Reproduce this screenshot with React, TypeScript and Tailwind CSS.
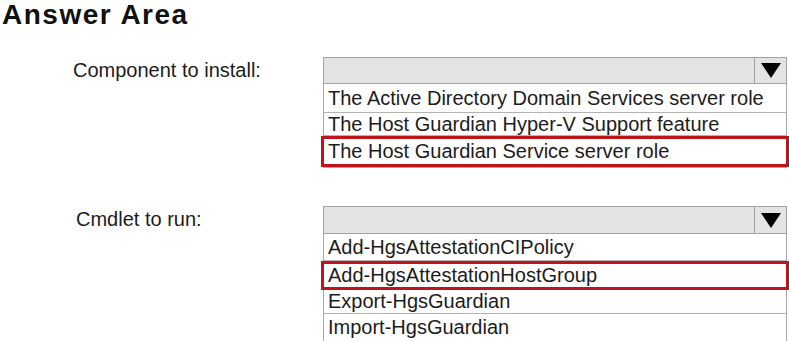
import React from "react";

interface Option {
  label: string;
  height: string;
  selected?: boolean;
}

interface AnswerRowProps {
  label: string;
  labelPad: string;
  boxHeight: string;
  options: Option[];
  className?: string;
}

function Arrow() {
  return (
    <svg width="20" height="15" viewBox="0 0 20 15">
      <polygon points="0,0 20,0 10,15" fill="#000" />
    </svg>
  );
}

function AnswerRow({ label, labelPad, boxHeight, options, className }: AnswerRowProps) {
  return (
    <div className={`flex ${className ?? ""}`}>
      <div className={`w-[323px] pt-[2px] text-[20px] leading-[23px] ${labelPad}`}>{label}</div>
      <div className="w-[464px]">
        <div className={`flex justify-end border border-[#a3a3a3] bg-[#e3e3e3] ${boxHeight}`}>
          <div className="flex w-[32px] items-center justify-center border-l border-[#a3a3a3]">
            <Arrow />
          </div>
        </div>
        <div className="border-x border-b border-[#a8a8a8] bg-white">
          {options.map((opt, i) =>
            opt.selected ? (
              <div
                key={i}
                className={`relative -mx-[3px] flex items-center border-[3px] border-[#c0131c] pl-[4px] text-[20px] leading-[23px] ${opt.height}`}
              >
                {opt.label}
              </div>
            ) : (
              <div
                key={i}
                className={`flex items-center pl-[4px] text-[20px] leading-[23px] ${
                  i < options.length - 1 ? "border-b border-[#b3b3b3]" : ""
                } ${opt.height}`}
              >
                {opt.label}
              </div>
            )
          )}
        </div>
      </div>
    </div>
  );
}

export default function App() {
  return (
    <div className="h-[341px] w-[789px] overflow-hidden bg-white font-['Liberation_Sans',Arial,sans-serif] text-[#1c1c1c]">
      <h1 className="pl-[2px] text-[28px] font-bold leading-[30px] tracking-[1.5px] text-[#111]">Answer Area</h1>

      <AnswerRow
        className="mt-[27px]"
        label="Component to install:"
        labelPad="pl-[73px]"
        boxHeight="h-[27px]"
        options={[
          { label: "The Active Directory Domain Services server role", height: "h-[29px]" },
          { label: "The Host Guardian Hyper-V Support feature", height: "h-[23px]" },
          { label: "The Host Guardian Service server role", height: "h-[31px]", selected: true },
        ]}
      />

      <AnswerRow
        className="mt-[38px]"
        label="Cmdlet to run:"
        labelPad="pl-[76px]"
        boxHeight="h-[28px]"
        options={[
          { label: "Add-HgsAttestationCIPolicy", height: "h-[27px]" },
          { label: "Add-HgsAttestationHostGroup", height: "h-[29px]", selected: true },
          { label: "Export-HgsGuardian", height: "h-[24px]" },
          { label: "Import-HgsGuardian", height: "h-[27px]" },
        ]}
      />
    </div>
  );
}
